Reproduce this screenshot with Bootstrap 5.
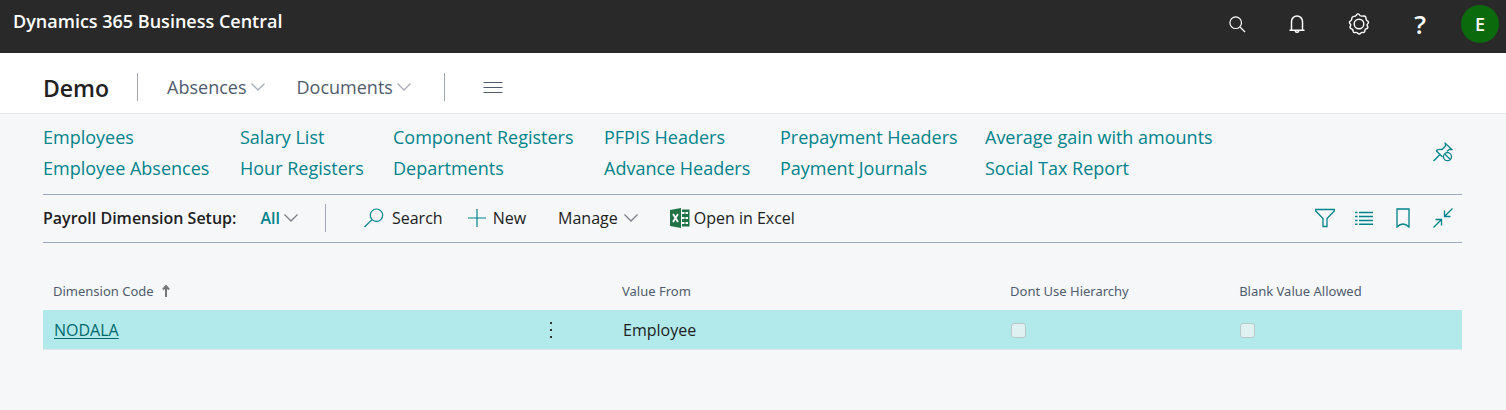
<!DOCTYPE html>
<html lang="en">
<head>
<meta charset="utf-8">
<meta name="viewport" content="width=device-width, initial-scale=1">
<title>Payroll Dimension Setup - Dynamics 365 Business Central</title>
<link href="https://cdn.jsdelivr.net/npm/bootstrap@5.3.0/dist/css/bootstrap.min.css" rel="stylesheet">
<style>
  body { font-family: "Segoe UI", "Open Sans", "Noto Sans", sans-serif; font-size: 16px; line-height: 24px; color: #212121; background: #f5f7f9; }
  a { color: #00838a; text-decoration: none; }
  svg { display: block; flex: none; fill: none; stroke: currentColor; }
  svg.solid { stroke: none; }
  button { color: inherit; background: none; border: 0; padding: 0; display: inline-flex; align-items: center; }
  .topbar { background: #292929; color: #fff; height: 53px; padding: 0 7px 0 13px; }
  .product { font-size: 18px; font-weight: 600; padding-bottom: 12px; }
  .top-tools { gap: 42px; padding-bottom: 5px; }
  .help-mark { font-size: 26px; font-weight: 600; margin-left: 2px; }
  .avatar { width: 38px; height: 38px; background: #0b6a0b; font-size: 18px; font-weight: 600; justify-content: center; margin-left: -7px; }
  .rolebar { height: 61px; background: #fff; border-bottom: 1px solid #e4e8eb; padding: 8px 44px 0 43px; }
  .company { font-size: 23px; font-weight: 600; line-height: 32px; padding-top: 2px; color: #212121; }
  .menu-btn { font-size: 18px; color: #505c6d; gap: 4px; }
  .menu-btn .chev { color: #a6acb5; }
  .menu-btn + .menu-btn { margin-left: 32px; }
  .rule-v { width: 1px; height: 28px; background: #a0a9b5; }
  .company + .rule-v { margin: 0 29px 0 28px; }
  .menu-btn + .rule-v { margin: 0 38px 0 33px; }
  .page-body { padding: 0 44px 0 43px; }
  .role-links { padding: 8px 0 10px; }
  .link-grid { display: grid; grid-template-columns: 197px 153px 211px 176px 205px auto; font-size: 18px; line-height: 31px; white-space: nowrap; }
  .pin-btn, .view-tools { color: #00838a; padding-right: 9px; }
  .pin-btn { padding-bottom: 3px; }
  .actionbar { height: 49px; border-top: 1px solid #9fabba; border-bottom: 1px solid #9fabba; padding-bottom: 2px; white-space: nowrap; }
  .actionbar .rule-v { margin: 0 38px 0 27px; }
  .list-name { font-weight: 600; }
  .cmd { gap: 6px; }
  .cmd-gap { margin-left: 32px; }
  .teal { color: #00838a; }
  .chev { color: #7c8087; }
  .view-tools { gap: 20px; }
  .records { table-layout: fixed; margin-top: 29px; width: 100%; }
  .records th { font-family: "Segoe UI", "Noto Sans", sans-serif; font-size: 13px; font-weight: 400; color: #505c6d; height: 38px; padding: 0 10px; }
  .records td { background: #b2eaec; height: 39px; padding: 2px 11px 0; border-bottom: 1px solid #dde6e8; }
  .records td a { color: #00686c; text-decoration: underline; text-underline-offset: 2px; }
  .records th svg { color: #777; stroke-width: 2; }
  .flag { appearance: none; display: block; width: 15px; height: 15px; margin: 0; background: #e0f1f2; border: 1px solid #b9c9ca; border-radius: 3px; }
  .col-code { width: 40.1%; } .col-from { width: 27.35%; } .col-hier { width: 16.14%; }
</style>
</head>
<body>
<header class="topbar d-flex align-items-center justify-content-between">
  <span class="product">Dynamics 365 Business Central</span>
  <div class="top-tools d-flex align-items-center">
    <button type="button" aria-label="Search"><svg width="18" height="18" viewBox="0 0 18 18" stroke-width="1.2"><circle cx="7.7" cy="7.7" r="5.8"/><path d="M12 12l5 5"/></svg></button>
    <button type="button" aria-label="Notifications"><svg width="18" height="20" viewBox="0 0 18 20" stroke-width="1.5"><path d="M3.500 16V7.500a5.500 5.500 0 0 1 11 0V16M1.500 16.200h15M7 17.200q2 2 4 0"/></svg></button>
    <button type="button" aria-label="Settings"><svg width="22" height="22" viewBox="0 0 22 22" stroke-width="1.4"><circle cx="11" cy="11" r="4.8"/><path d="M11 1.2q1.1 2.2 3.2 1.9q2.8-.5 3.5.8q.3 1.1 .4 2.2q.3 1.4 1.9 2.2q1.2 1.5-.5 2.7q-1 .9.2 2.5q.6 1.6-1.3 2.3q-1.5.2-1.5 1.8q0 2-1.9 1.9q-1.7-.4-2.4.9q-1.6 1.3-2.8-.2q-1.1-1.3-2.8-.6q-1.8.2-1.9-1.7q0-1.8-1.7-2.1q-1.8-.6-1.2-2.3q1-1.5.1-2.5q-1.5-1.4-.3-2.7q1.7-.9 1.8-2.3q-.2-2.2 1.8-2.6q1.8.1 2.7-1q1.2-2.3 2.7-1.200z"/></svg></button>
    <button type="button" class="help-mark" aria-label="Help">?</button>
    <button type="button" class="avatar rounded-circle" aria-label="Account">E</button>
  </div>
</header>

<nav class="rolebar d-flex align-items-center">
  <a href="#" class="company">Demo</a>
  <span class="rule-v"></span>
  <button type="button" class="menu-btn">Absences <svg class="chev" width="14" height="10" viewBox="0 0 14 10" stroke-width="1.300"><path d="M.5 1.500L7 8l6.500-6.500"/></svg></button>
  <button type="button" class="menu-btn">Documents <svg class="chev" width="14" height="10" viewBox="0 0 14 10" stroke-width="1.300"><path d="M.5 1.500L7 8l6.500-6.500"/></svg></button>
  <span class="rule-v"></span>
  <button type="button" class="menu-btn" aria-label="More pages"><svg width="20" height="14" viewBox="0 0 20 14"><path d="M.5 2.500h19M.5 7.500h19M.5 12.500h19"/></svg></button>
</nav>

<main class="page-body">
  <div class="role-links d-flex align-items-center justify-content-between">
    <div class="link-grid">
      <a href="#">Employees</a><a href="#">Salary List</a><a href="#">Component Registers</a><a href="#">PFPIS Headers</a><a href="#">Prepayment Headers</a><a href="#">Average gain with amounts</a>
      <a href="#">Employee Absences</a><a href="#">Hour Registers</a><a href="#">Departments</a><a href="#">Advance Headers</a><a href="#">Payment Journals</a><a href="#">Social Tax Report</a>
    </div>
    <button type="button" class="pin-btn" aria-label="Unpin"><svg width="20" height="20" viewBox="0 0 20 20" stroke-width="1.300"><path d="M.5 19l7-7M3 8.500l6.500 6.500M3 8.500q3-1.500 6-1l3.500-3.500-.2-2.700 6.500 6.200-2.500-.2-2.500 2.200"/><circle cx="14.500" cy="14.700" r="4"/><path d="M11.700 11.900l5.600 5.600"/></svg></button>
  </div>

  <div class="actionbar d-flex align-items-center">
    <span class="list-name">Payroll Dimension Setup:</span>
    <button type="button" class="list-name teal ms-4">All <svg class="chev ms-1" width="14" height="10" viewBox="0 0 14 10" stroke-width="1.300"><path d="M.5 1.500L7 8l6.500-6.500"/></svg></button>
    <span class="rule-v"></span>
    <button type="button" class="gap-2"><svg class="teal" width="20" height="20" viewBox="0 0 20 20" stroke-width="1.200"><circle cx="12.500" cy="7.200" r="6.200"/><path d="M8 11.600L.5 19"/></svg>Search</button>
    <button type="button" class="cmd ms-4"><svg class="teal" width="20" height="20" viewBox="0 0 20 20" stroke-width="1.200"><path d="M10 1v18M1 10h18"/></svg>New</button>
    <button type="button" class="cmd cmd-gap">Manage <svg class="chev" width="14" height="10" viewBox="0 0 14 10" stroke-width="1.300"><path d="M.5 1.500L7 8l6.500-6.500"/></svg></button>
    <button type="button" class="cmd-gap gap-1"><svg class="solid" width="20" height="20" viewBox="0 0 20 20"><path fill="#217346" d="M0 2l11-2v20L0 18zM12 1.500h7.500v17H12z"/><path stroke="#fff" stroke-width="1.800" d="M3 6l5 8M8 6l-5 8"/><path fill="#fff" d="M12 4h2.500v2H12zM15.500 4H18v2h-2.500zM12 9h2.500v2H12zM15.500 9H18v2h-2.500zM12 14h2.500v2H12zM15.500 14H18v2h-2.500z"/></svg>Open in Excel</button>
    <div class="view-tools d-flex align-items-center ms-auto">
      <button type="button" aria-label="Filter"><svg width="20" height="20" viewBox="0 0 20 20" stroke-width="1.300"><path d="M.7 1.500h18.600v1.500L12 10.500v8H8v-8L.7 3z"/></svg></button>
      <button type="button" aria-label="List view"><svg width="18" height="14" viewBox="0 0 18 14" stroke-width="1.400"><path d="M0 1.500h2.500M4 1.500h14M0 5.500h2.500M4 5.500h14M0 9.500h2.500M4 9.500h14M0 13.300h2.500M4 13.300h14"/></svg></button>
      <button type="button" aria-label="Bookmark"><svg width="20" height="20" viewBox="0 0 20 20" stroke-width="1.300"><path d="M4 1h12v18q-3-3-6-3T4 19z"/></svg></button>
      <button type="button" aria-label="Collapse"><svg width="20" height="20" viewBox="0 0 20 20" stroke-width="1.300"><path d="M19.500.5L12 8M11.500 2.500v6h6M.5 19.500L8 12M2.500 11.500h6v6"/></svg></button>
    </div>
  </div>

  <table class="records">
    <colgroup><col class="col-code"><col class="col-from"><col class="col-hier"><col></colgroup>
    <thead>
      <tr>
        <th scope="col"><span class="d-flex align-items-center gap-2">Dimension Code <svg width="8" height="12" viewBox="0 0 8 12"><path d="M4 12V2M1 4.500L4 1l3 3.500"/></svg></span></th>
        <th scope="col">Value From</th>
        <th scope="col" id="hier">Dont Use Hierarchy</th>
        <th scope="col" id="blank">Blank Value Allowed</th>
      </tr>
    </thead>
    <tbody>
      <tr>
        <td><div class="d-flex align-items-center justify-content-between"><a href="#">NODALA</a>
          <button type="button" class="me-5" aria-label="Row options"><svg class="solid" width="4" height="18" viewBox="0 0 4 18"><path fill="#333" d="M1 1h2v2H1zM1 8h2v2H1zM1 15h2v2H1z"/></svg></button></div></td>
        <td>Employee</td>
        <td><input class="flag" type="checkbox" aria-labelledby="hier" disabled></td>
        <td><input class="flag" type="checkbox" aria-labelledby="blank" disabled></td>
      </tr>
    </tbody>
  </table>
</main>
<script src="https://cdn.jsdelivr.net/npm/bootstrap@5.3.0/dist/js/bootstrap.bundle.min.js"></script>
</body>
</html>
